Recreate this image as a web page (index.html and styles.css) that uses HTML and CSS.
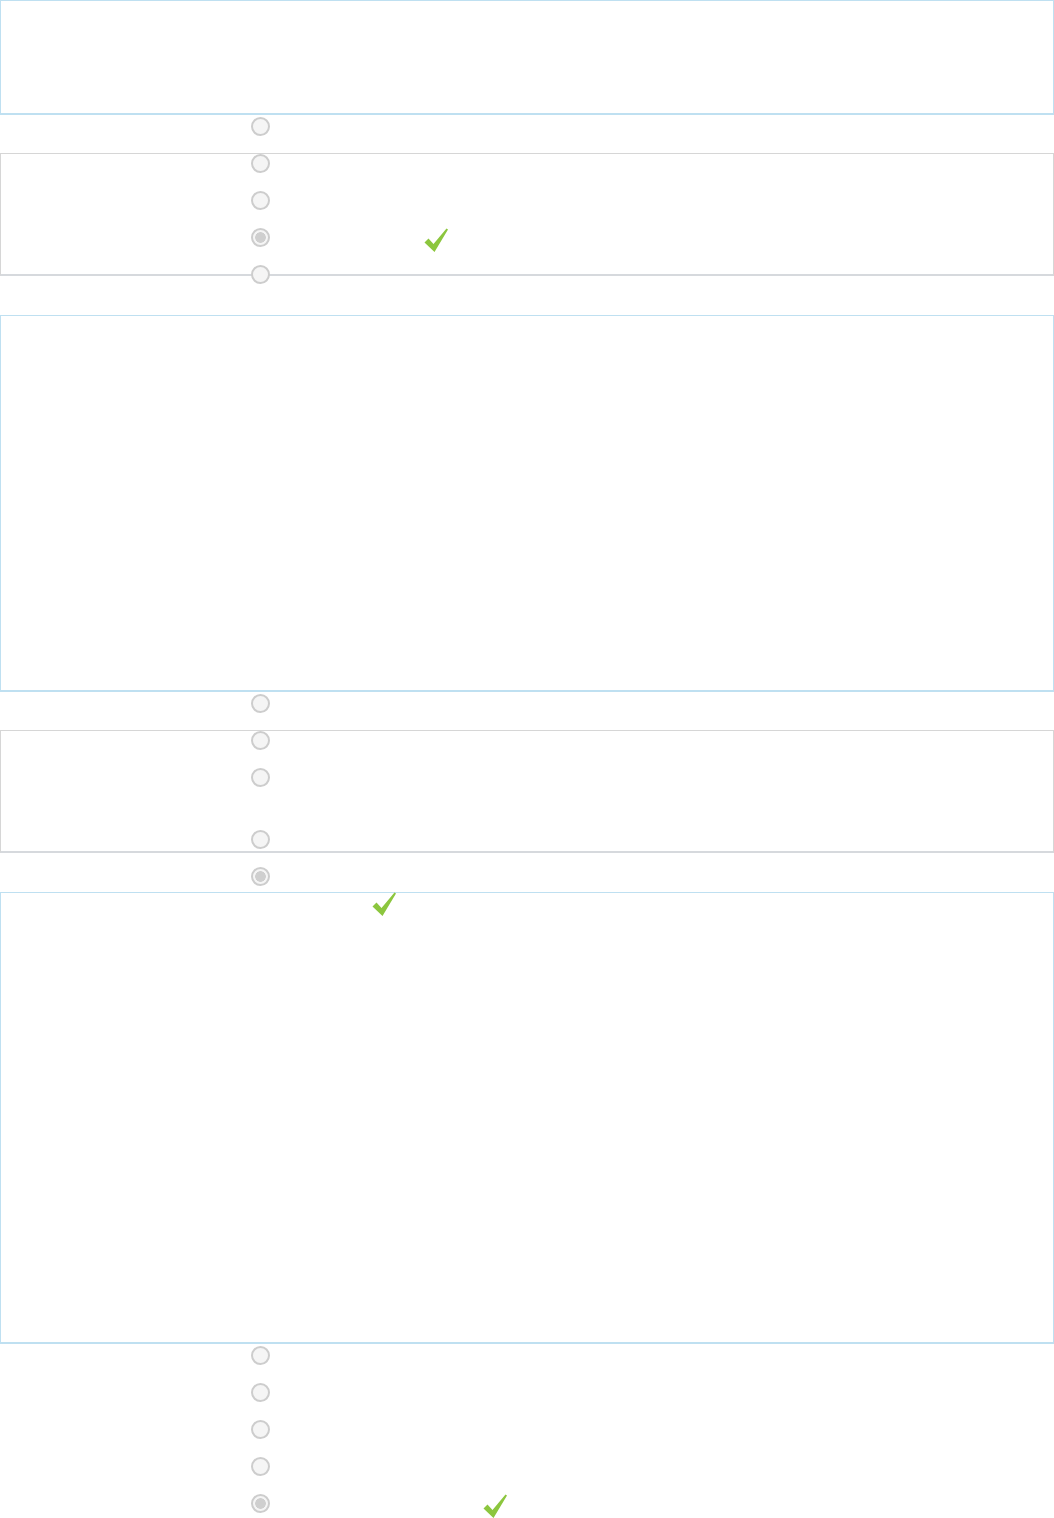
FILE: index.html
```html
<!DOCTYPE html>
<html lang="en">
<head>
    <meta charset="UTF-8">
    <meta name="viewport" content="width=device-width, initial-scale=1.0">
    <title>Quiz Review</title>
    <link rel="stylesheet" href="styles.css">
</head>
<body>
    <div class="question q1"></div>
    <div class="answers">
        <div class="panel"></div>
        <div class="row"><input type="radio" name="a1" disabled></div>
        <div class="row"><input type="radio" name="a1" disabled></div>
        <div class="row"><input type="radio" name="a1" disabled></div>
        <div class="row"><input type="radio" name="a1" checked disabled><span class="check c1"><svg viewBox="0 0 24 24" width="24" height="24"><path d="M0.5 14.5 L4.5 10.5 L9.5 16 L22.5 0.5 L24 1.5 L10.5 24 Z" fill="#8cc63e"/></svg></span></div>
        <div class="row"><input type="radio" name="a1" disabled></div>
    </div>

    <div class="question q2"></div>
    <div class="answers">
        <div class="panel"></div>
        <div class="row"><input type="radio" name="a2" disabled></div>
        <div class="row"><input type="radio" name="a2" disabled></div>
        <div class="row tall"><input type="radio" name="a2" disabled></div>
        <div class="row"><input type="radio" name="a2" disabled></div>
        <div class="row"><input type="radio" name="a2" checked disabled><span class="check c2"><svg viewBox="0 0 24 24" width="24" height="24"><path d="M0.5 14.5 L4.5 10.5 L9.5 16 L22.5 0.5 L24 1.5 L10.5 24 Z" fill="#8cc63e"/></svg></span></div>
    </div>

    <div class="question q3"></div>
    <div class="answers">
        <div class="row"><input type="radio" name="a3" disabled></div>
        <div class="row"><input type="radio" name="a3" disabled></div>
        <div class="row"><input type="radio" name="a3" disabled></div>
        <div class="row"><input type="radio" name="a3" disabled></div>
        <div class="row"><input type="radio" name="a3" checked disabled><span class="check c3"><svg viewBox="0 0 24 24" width="24" height="24"><path d="M0.5 14.5 L4.5 10.5 L9.5 16 L22.5 0.5 L24 1.5 L10.5 24 Z" fill="#8cc63e"/></svg></span></div>
    </div>
</body>
</html>
```

FILE: styles.css
```css
body {
    font-family: "Open Sans", Arial, sans-serif;
    margin: 0;
    background: #fff;
}
.question {
    box-sizing: border-box;
    border: 1px solid #bfe0f1;
    border-bottom-width: 2px;
}
.q1 {
    height: 115px;
}
.q2 {
    height: 377px;
    margin-top: 15px;
}
.q3 {
    height: 452px;
    margin-top: -10px;
}
.answers {
    position: relative;
}
.panel {
    position: absolute;
    top: 38px;
    left: 0;
    right: 0;
    height: 123px;
    box-sizing: border-box;
    border: 1px solid #d6d6d6;
    border-bottom: 2px solid #d6d9dd;
}
.row {
    position: relative;
    display: flex;
    align-items: flex-start;
    height: 37px;
    box-sizing: border-box;
    padding: 2px 0 0 251px;
}
.row.tall {
    height: 62px;
}
.row input {
    appearance: none;
    -webkit-appearance: none;
    width: 19px;
    height: 19px;
    margin: 0;
    border: 2px solid #cdcdcd;
    border-radius: 50%;
    background: #f5f5f5;
    box-sizing: border-box;
}
.row input:checked {
    background: radial-gradient(circle, #cfcfcf 0 5px, #f5f5f5 5.6px);
}
.check {
    display: block;
    width: 24px;
    height: 24px;
}
.check svg {
    display: block;
}
.c1 {
    margin-left: 154px;
}
.c2 {
    margin-left: 102px;
    margin-top: 25px;
}
.c3 {
    margin-left: 213px;
}
```
